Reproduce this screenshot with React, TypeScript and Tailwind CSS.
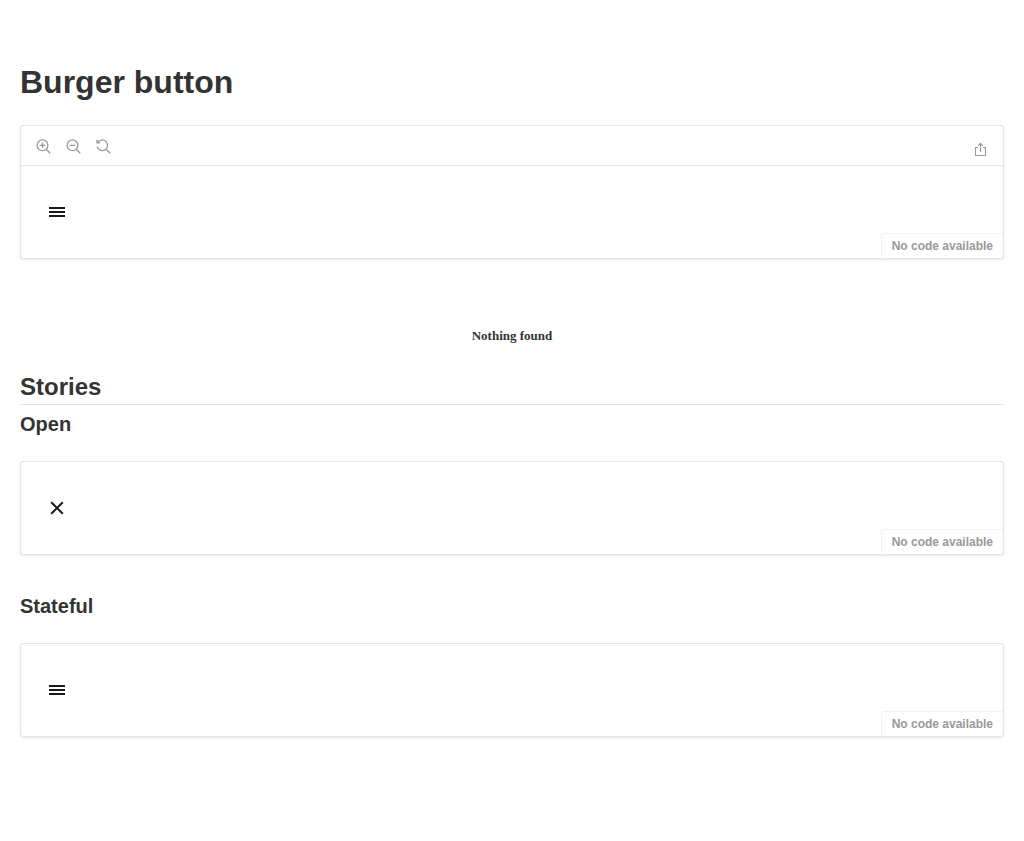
import type { ReactNode } from "react";

function ToolIcon({ kind }: { kind: "in" | "out" | "reset" }) {
  return (
    <svg viewBox="0 0 14 14" className="size-3.5 overflow-visible fill-none stroke-[#999999]" strokeWidth="1.3">
      {kind === "reset" ? (
        <path d="M1 .8v3h3M1.6 3.8A5.3 5.3 0 1 1 1.2 7.7M10.2 10.2l4 4" />
      ) : (
        <>
          <circle cx="6.5" cy="6.3" r="5.4" />
          <path d="M10.2 10.2l4 4M3.7 6.3h5.6" />
          {kind === "in" && <path d="M6.5 3.5v5.6" />}
        </>
      )}
    </svg>
  );
}

function Burger({ open = false }: { open?: boolean }) {
  return (
    <svg viewBox="0 0 16 16" className="size-4 fill-none stroke-[#1a1a1a]" strokeWidth="2">
      {open ? <path d="M2.2 2.2l11.6 11.6M13.8 2.2L2.2 13.8" /> : <path d="M0 4h16M0 8h16M0 12h16" />}
    </svg>
  );
}

function Preview({ children, toolbar = false }: { children: ReactNode; toolbar?: boolean }) {
  return (
    <div className="overflow-hidden rounded border border-black/10 bg-white shadow-[0_1px_3px_0_rgba(0,0,0,0.1)]">
      {toolbar && (
        <div className="flex h-10 justify-between border-b border-black/10 px-[15px]">
          <div className="flex gap-4 pt-[13px]">
            <ToolIcon kind="in" />
            <ToolIcon kind="out" />
            <ToolIcon kind="reset" />
          </div>
          <svg viewBox="0 0 14 14" className="mt-4 size-3.5 fill-none stroke-[#999999]" strokeWidth="1.1">
            <path d="M4 5.5H1.5v8h10v-8H9M6.5 10V1.2M4 3.8L6.5 1.3 9 3.8" />
          </svg>
        </div>
      )}
      <div className="flex h-[92px] items-end justify-between">
        <div className="flex h-full items-center pl-7">{children}</div>
        <button className="h-[25px] rounded-tl border-t border-l border-black/5 px-2.5 text-xs leading-4 font-bold text-[#999999]">
          No code available
        </button>
      </div>
    </div>
  );
}

export default function App() {
  return (
    <main className="min-h-[841px] bg-white px-5 pt-16 font-['Liberation_Sans',Arial,sans-serif] text-[#333333]">
      <h1 className="mb-[25px] text-[32px] leading-9 font-bold">Burger button</h1>
      <Preview toolbar>
        <Burger />
      </Preview>
      <p className="mt-[67px] text-center font-['Liberation_Serif',serif] text-[13px] leading-5 font-bold">Nothing found</p>
      <h2 className="mt-[25px] h-[34px] border-b border-black/10 text-2xl leading-8 font-bold">Stories</h2>
      <h3 className="mt-[7px] mb-[25px] text-xl leading-6 font-bold">Open</h3>
      <Preview>
        <Burger open />
      </Preview>
      <h3 className="mt-[39px] mb-[25px] text-xl leading-6 font-bold">Stateful</h3>
      <Preview>
        <Burger />
      </Preview>
    </main>
  );
}
